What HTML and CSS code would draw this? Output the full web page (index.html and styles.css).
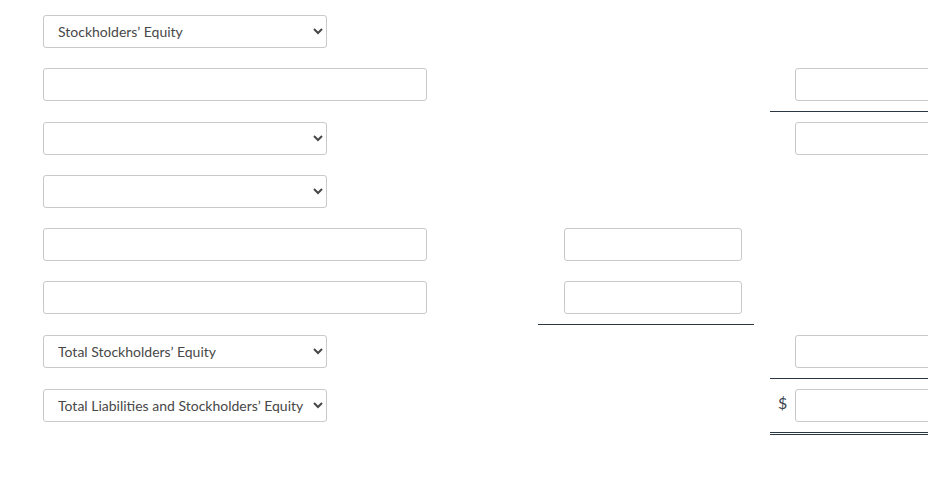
FILE: index.html
```html
<!DOCTYPE html>
<html lang="en">
<head>
<meta charset="utf-8">
<title>Balance Sheet</title>
<link rel="stylesheet" href="styles.css">
</head>
<body>
<div class="frame">
  <div class="sheet">
    <div class="cell c1"><select class="sel"><option>Stockholders’ Equity</option></select></div>
    <div class="cell c2"></div>
    <div class="cell c3"></div>

    <div class="cell c1"><input class="txt wide" type="text"></div>
    <div class="cell c2"></div>
    <div class="cell c3 rule"><input class="txt num" type="text"></div>

    <div class="cell c1"><select class="sel"><option></option></select></div>
    <div class="cell c2"></div>
    <div class="cell c3"><input class="txt num" type="text"></div>

    <div class="cell c1"><select class="sel"><option></option></select></div>
    <div class="cell c2"></div>
    <div class="cell c3"></div>

    <div class="cell c1"><input class="txt wide" type="text"></div>
    <div class="cell c2"><input class="txt num" type="text"></div>
    <div class="cell c3"></div>

    <div class="cell c1"><input class="txt wide" type="text"></div>
    <div class="cell c2 rule"><input class="txt num" type="text"></div>
    <div class="cell c3"></div>

    <div class="cell c1"><select class="sel"><option>Total Stockholders’ Equity</option></select></div>
    <div class="cell c2"></div>
    <div class="cell c3 rule"><input class="txt num" type="text"></div>

    <div class="cell c1"><select class="sel"><option>Total Liabilities and Stockholders’ Equity</option></select></div>
    <div class="cell c2"></div>
    <div class="cell c3 dbl"><span class="cur">$</span><input class="txt num" type="text"></div>
  </div>
</div>
</body>
</html>
```
FILE: styles.css
```css
html, body {
  margin: 0;
  padding: 0;
  background: #fff;
}
body {
  font-family: Lato, "Liberation Sans", sans-serif;
  color: #333;
}
.frame {
  width: 928px;
  overflow: hidden;
  padding-top: 5px;
}
.sheet {
  display: grid;
  grid-template-columns: 495px 216px 1fr;
  align-items: start;
  padding-left: 43px;
}
.cell {
  box-sizing: border-box;
  padding: 10px 0;
  height: 53px;
  display: flex;
  align-items: center;
}
.c2 {
  padding-left: 26px;
}
.c3 {
  margin-left: 16px;
  padding-left: 25px;
  position: relative;
  white-space: nowrap;
}
.rule {
  height: 54px;
  border-bottom: 1px solid #2b3844;
}
.dbl {
  height: 56px;
  border-bottom: 3px double #2b3844;
}
.sel, .txt {
  box-sizing: border-box;
  height: 33px;
  border: 1px solid #c9c9c9;
  border-radius: 3px;
  background: #fff;
  font-family: Lato, "Liberation Sans", sans-serif;
  font-size: 14px;
  color: #484848;
  margin: 0;
  flex: none;
}
.sel {
  width: 284px;
  padding: 0 0 0 10px;
}
.txt {
  padding: 0 6px;
}
.wide {
  width: 384px;
}
.num {
  width: 178px;
}
.cur {
  position: absolute;
  left: 8px;
  top: 14px;
  font-size: 16px;
  color: #3a4550;
}
```
